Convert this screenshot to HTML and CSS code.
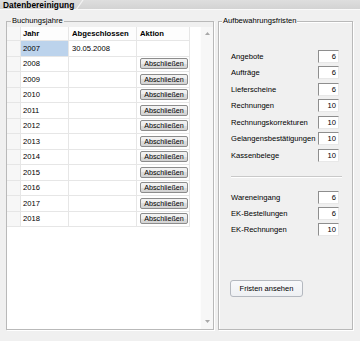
FILE: index.html
```html
<!DOCTYPE html>
<html lang="de">
<head>
<meta charset="utf-8">
<title>Datenbereinigung</title>
<link rel="stylesheet" href="styles.css">
</head>
<body>
<div class="window">
  <div class="titlebar">
    <span class="title">Datenbereinigung</span>
    <svg class="slant" width="9" height="10" viewBox="0 0 9 10"><path d="M1 10 L8 0" stroke="#f4f4f4" stroke-width="1.2" fill="none"/></svg>
  </div>
  <div class="panel">
    <div class="group group-left">
      <span class="legend">Buchungsjahre</span>
      <div class="listbox">
        <div class="grid">
          <div class="cell rh hd"></div>
          <div class="cell hd c2">Jahr</div>
          <div class="cell hd">Abgeschlossen</div>
          <div class="cell hd">Aktion</div>

          <div class="cell rh"></div>
          <div class="cell c2 sel">2007</div>
          <div class="cell">30.05.2008</div>
          <div class="cell"></div>

          <div class="cell rh"></div><div class="cell c2">2008</div><div class="cell"></div><div class="cell"><button class="btn-small">Abschließen</button></div>
          <div class="cell rh"></div><div class="cell c2">2009</div><div class="cell"></div><div class="cell"><button class="btn-small">Abschließen</button></div>
          <div class="cell rh"></div><div class="cell c2">2010</div><div class="cell"></div><div class="cell"><button class="btn-small">Abschließen</button></div>
          <div class="cell rh"></div><div class="cell c2">2011</div><div class="cell"></div><div class="cell"><button class="btn-small">Abschließen</button></div>
          <div class="cell rh"></div><div class="cell c2">2012</div><div class="cell"></div><div class="cell"><button class="btn-small">Abschließen</button></div>
          <div class="cell rh"></div><div class="cell c2">2013</div><div class="cell"></div><div class="cell"><button class="btn-small">Abschließen</button></div>
          <div class="cell rh"></div><div class="cell c2">2014</div><div class="cell"></div><div class="cell"><button class="btn-small">Abschließen</button></div>
          <div class="cell rh"></div><div class="cell c2">2015</div><div class="cell"></div><div class="cell"><button class="btn-small">Abschließen</button></div>
          <div class="cell rh"></div><div class="cell c2">2016</div><div class="cell"></div><div class="cell"><button class="btn-small">Abschließen</button></div>
          <div class="cell rh"></div><div class="cell c2">2017</div><div class="cell"></div><div class="cell"><button class="btn-small">Abschließen</button></div>
          <div class="cell rh"></div><div class="cell c2">2018</div><div class="cell"></div><div class="cell"><button class="btn-small">Abschließen</button></div>
        </div>
        <div class="scrollbar">
          <svg class="arrow" width="5" height="3" viewBox="0 0 5 3"><path d="M0 3 L2.5 0 L5 3 Z" fill="#a8a8a8"/></svg>
          <svg class="arrow" width="5" height="3" viewBox="0 0 5 3"><path d="M0 0 L5 0 L2.5 3 Z" fill="#a8a8a8"/></svg>
        </div>
      </div>
    </div>
    <div class="group group-right">
      <span class="legend">Aufbewahrungsfristen</span>
      <div class="fields">
        <div class="row"><span class="lbl">Angebote</span><span class="num">6</span></div>
        <div class="row"><span class="lbl">Aufträge</span><span class="num">6</span></div>
        <div class="row"><span class="lbl">Lieferscheine</span><span class="num">6</span></div>
        <div class="row"><span class="lbl">Rechnungen</span><span class="num">10</span></div>
        <div class="row"><span class="lbl">Rechnungskorrekturen</span><span class="num">10</span></div>
        <div class="row"><span class="lbl">Gelangensbestätigungen</span><span class="num">10</span></div>
        <div class="row"><span class="lbl">Kassenbelege</span><span class="num">10</span></div>
      </div>
      <div class="sep"></div>
      <div class="fields fields-ek">
        <div class="row"><span class="lbl">Wareneingang</span><span class="num">6</span></div>
        <div class="row"><span class="lbl">EK-Bestellungen</span><span class="num">6</span></div>
        <div class="row"><span class="lbl">EK-Rechnungen</span><span class="num">10</span></div>
      </div>
      <button class="btn-fristen">Fristen ansehen</button>
    </div>
  </div>
</div>
</body>
</html>
```
FILE: styles.css
```css
* { box-sizing: border-box; }
html, body { margin: 0; padding: 0; }
body {
  background: #f0f0f0;
  font-family: "Liberation Sans", Arial, sans-serif;
  font-size: 7.6px;
  color: #000;
  width: 360px;
  height: 341px;
  overflow: hidden;
}
.window { width: 360px; height: 341px; }

.titlebar {
  height: 10px;
  background: linear-gradient(#dedede, #d3d3d3);
  border-bottom: 1px solid #fafafa;
  display: flex;
  align-items: flex-start;
}
.title {
  font-weight: bold;
  font-size: 8.3px;
  line-height: 9px;
  padding: 1px 0 0 3px;
  letter-spacing: 0.05px;
}
.slant { margin-left: 1px; display: block; }

.panel {
  display: flex;
  gap: 4px;
  padding: 11px 7px 0 6px;
}
.group {
  position: relative;
  height: 309px;
  border: 1px solid #b9b9b9;
  box-shadow: 1px 1px 0 #fff, inset 1px 1px 0 #fff;
}
.legend {
  position: absolute;
  top: -6px;
  background: #f0f0f0;
  padding: 0 1px;
  line-height: 9px;
  white-space: nowrap;
}
.group-left { width: 208px; padding-top: 5px; box-shadow: 1px 1px 0 #fff; }
.group-left .legend { left: 4px; }
.group-right { width: 135px; padding: 26px 13px 0 12px; }
.group-right .legend { left: 3px; }

.listbox {
  display: flex;
  background: #fff;
  height: 302px;
}
.grid {
  width: 183px;
  display: grid;
  grid-template-columns: 14px 48px 68px 53px;
  grid-template-rows: 14px repeat(12, 15.5px);
  align-content: start;
  margin-right: 10px;
}
.cell {
  border-right: 1px solid #e6e6e6;
  border-bottom: 1px solid #e6e6e6;
  padding-left: 3px;
  display: flex;
  align-items: center;
  white-space: nowrap;
}
.cell.c2 { padding-left: 2px; }
.hd { font-weight: bold; background: #fdfdfd; font-size: 7.7px; }
.rh { background: #f7f7f7; padding: 0; }
.sel { background: #bcd3ec; }

.btn-small {
  font-family: "Liberation Sans", Arial, sans-serif;
  font-size: 7.2px;
  width: 48px;
  height: 11px;
  padding: 0;
  margin: 0;
  line-height: 9px;
  border: 1px solid #8c8c8c;
  border-radius: 2px;
  background: linear-gradient(#f3f3f3, #ececec 50%, #dedede 50%, #d2d2d2);
  color: #000;
}

.scrollbar {
  width: 13px;
  background: #f7f7f7;
  border-left: 1px solid #fdfdfd;
  display: flex;
  flex-direction: column;
  justify-content: space-between;
  align-items: center;
  padding: 5px 0 6px;
}
.arrow { display: block; }

.fields { display: flex; flex-direction: column; }
.row {
  display: flex;
  align-items: center;
  justify-content: space-between;
  height: 16.5px;
}
.fields-ek .row { height: 16px; }
.lbl { white-space: nowrap; }
.num {
  width: 21px;
  height: 13px;
  background: #fff;
  border-top: 1px solid #8e8e8e;
  border-left: 1px solid #8e8e8e;
  border-right: 1px solid #e8e8e8;
  border-bottom: 1px solid #e8e8e8;
  text-align: right;
  padding-right: 2px;
  line-height: 11px;
}
.sep {
  width: 111px;
  height: 2px;
  margin: 12.8px 0 11px 0;
  border-top: 1px solid #c9c9c9;
  border-bottom: 1px solid #fff;
}
.btn-fristen {
  display: block;
  margin: 42.7px 0 0 -1px;
  width: 73px;
  height: 17px;
  padding: 0;
  font-family: "Liberation Sans", Arial, sans-serif;
  font-size: 7.5px;
  color: #000;
  border: 1px solid #b4b8bf;
  border-radius: 3px;
  background: linear-gradient(#f8f9fb, #eef0f3);
}
```
